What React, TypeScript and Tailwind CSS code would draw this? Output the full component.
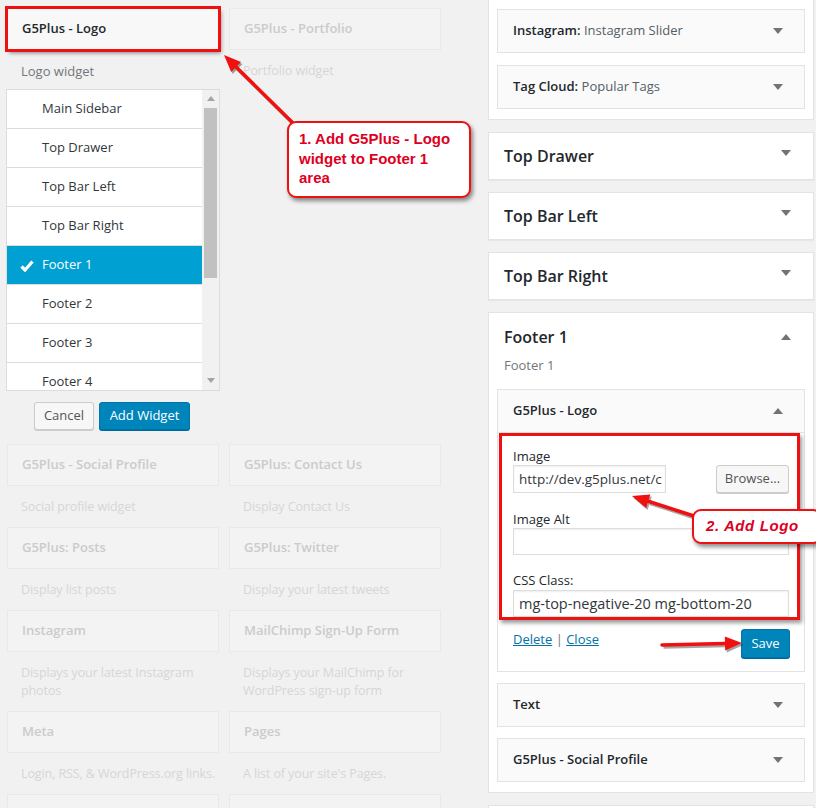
import React from 'react';

type Pair = [string, string];

const fadedWidgets: Pair[] = [
  ['G5Plus - Social Profile', 'Social profile widget'],
  ['G5Plus: Contact Us', 'Display Contact Us'],
  ['G5Plus: Posts', 'Display list posts'],
  ['G5Plus: Twitter', 'Display your latest tweets'],
  ['Instagram', 'Displays your latest Instagram photos'],
  ['MailChimp Sign-Up Form', 'Displays your MailChimp for WordPress sign-up form'],
  ['Meta', 'Login, RSS, & WordPress.org links.'],
  ['Pages', "A list of your site's Pages."],
  ['', ''],
  ['', ''],
];

const sidebars = ['Main Sidebar', 'Top Drawer', 'Top Bar Left', 'Top Bar Right', 'Footer 1', 'Footer 2', 'Footer 3', 'Footer 4'];

function Caret({ up = false }: { up?: boolean }) {
  return (
    <svg width="10" height="6" viewBox="0 0 10 6" className="shrink-0">
      <polygon points={up ? '0,6 10,6 5,0' : '0,0 10,0 5,6'} fill="#6f7479" />
    </svg>
  );
}

function FadedWidget({ title, desc }: { title: string; desc: string }) {
  return (
    <div>
      <div className="h-[42px] border border-[#e9e9e9] bg-[#f3f3f3] px-[14px] flex items-center text-[13px] font-semibold text-[#cbcbcb]">
        {title}
      </div>
      <div className="pl-[14px] -mr-[10px] pt-[12px] pb-[11px] text-[12.5px] leading-[18px] tracking-[-0.1px] text-[#d6d6d6]">{desc}</div>
    </div>
  );
}

function WidgetRow({ name, title, up = false }: { name: string; title?: string; up?: boolean }) {
  return (
    <div className="shrink-0 h-[44px] border border-[#e3e3e3] bg-[#fafafa] pl-[15px] pr-[21px] flex items-center justify-between">
      <span className="text-[13px] font-semibold text-[#23282d]">
        {name}
        {title && <span className="font-normal text-[#555d66]"> {title}</span>}
      </span>
      <Caret up={up} />
    </div>
  );
}

function AreaCard({ name }: { name: string }) {
  return (
    <div className="shrink-0 h-[48px] border border-[#e3e3e3] bg-white pl-[15px] pr-[22px] flex items-center justify-between shadow-[0_1px_1px_rgba(0,0,0,0.04)]">
      <span className="text-[16px] font-semibold text-[#23282d]">{name}</span>
      <span className="mb-[7px]">
        <Caret />
      </span>
    </div>
  );
}

function Field({ label, children, gap }: { label: string; children: React.ReactNode; gap: string }) {
  return (
    <div className={gap}>
      <div className="text-[13px] leading-[18px] text-[#23282d]">{label}</div>
      {children}
    </div>
  );
}

function Arrow({ x1, y1, x2, y2 }: { x1: number; y1: number; x2: number; y2: number }) {
  const a = Math.atan2(y2 - y1, x2 - x1);
  const len = 17;
  const w = 7;
  const bx = x2 - len * Math.cos(a);
  const by = y2 - len * Math.sin(a);
  const px = -Math.sin(a) * w;
  const py = Math.cos(a) * w;
  const head = `${x2},${y2} ${bx + px},${by + py} ${bx - px},${by - py}`;
  return (
    <g>
      <g transform="translate(1.5,2)" opacity="0.35">
        <line x1={x1} y1={y1} x2={bx} y2={by} stroke="#000" strokeWidth="3.5" />
        <polygon points={head} fill="#000" />
      </g>
      <line x1={x1} y1={y1} x2={bx} y2={by} stroke="#f01010" strokeWidth="3.5" strokeLinecap="round" />
      <polygon points={head} fill="#f01010" />
    </g>
  );
}

export default function App() {
  return (
    <div className="relative w-[816px] h-[808px] overflow-hidden bg-[#f1f1f1] font-['Open_Sans',sans-serif] flex items-start">
      {/* Available widgets */}
      <div className="w-[488px] shrink-0 pl-[7px] pt-[8px]">
        <div className="grid grid-cols-[212px_212px] gap-x-[10px] items-start">
          {/* G5Plus - Logo (expanded chooser) */}
          <div>
            <div className="h-[42px] border border-[#999] bg-[#f8f8f8] px-[14px] flex items-center text-[13px] font-semibold text-[#23282d] outline-[3px] outline-solid outline-[#ee1111] -outline-offset-1 shadow-[2px_3px_4px_rgba(0,0,0,0.45)]">
              G5Plus - Logo
            </div>
            <div className="px-[14px] pt-[12px] pb-[9px] text-[13px] leading-[18px] text-[#72777c]">Logo widget</div>
            <div className="-mx-px h-[302px] border border-[#dcdcdc] bg-white flex overflow-hidden">
              <div className="flex-1">
                {sidebars.map((s) => {
                  const on = s === 'Footer 1';
                  return (
                    <div
                      key={s}
                      className={`h-[39px] border-b border-[#dcdcdc] flex items-center relative pl-[35px] text-[13px] ${on ? 'bg-[#00a0d2] text-white' : 'text-[#32373c]'}`}
                    >
                      {on && (
                        <svg width="14" height="12" viewBox="0 0 14 12" className="absolute left-[13px] top-[14px]">
                          <path d="M1.5 6.5 L5 10 L12.5 1.5" stroke="#fff" strokeWidth="3.2" fill="none" />
                        </svg>
                      )}
                      {s}
                    </div>
                  );
                })}
              </div>
              <div className="w-[17px] bg-[#f1f1f1] flex flex-col items-center">
                <svg width="8" height="5" viewBox="0 0 8 5" className="mt-[6px]">
                  <polygon points="0,5 8,5 4,0" fill="#a3a3a3" />
                </svg>
                <div className="mt-[7px] w-[13px] h-[170px] bg-[#c1c1c1]" />
                <div className="flex-1" />
                <svg width="8" height="5" viewBox="0 0 8 5" className="mb-[7px]">
                  <polygon points="0,0 8,0 4,5" fill="#a3a3a3" />
                </svg>
              </div>
            </div>
            <div className="mt-[11px] mb-[14px] flex justify-center gap-[5px] pr-[2px]">
              <button className="h-[28px] w-[60px] rounded-[3px] border border-[#cccccc] bg-[#f7f7f7] text-[13px] text-[#555] shadow-[0_1px_0_#ccc]">
                Cancel
              </button>
              <button className="h-[28px] w-[91px] rounded-[3px] border border-[#0073aa] bg-[#0085ba] text-[13px] text-white shadow-[0_1px_0_#006799]">
                Add Widget
              </button>
            </div>
          </div>
          <FadedWidget title="G5Plus - Portfolio" desc="Portfolio widget" />
          {fadedWidgets.map(([t, d], i) => (
            <FadedWidget key={i} title={t} desc={d} />
          ))}
        </div>
      </div>

      {/* Widget areas */}
      <div className="w-[326px] shrink-0 flex flex-col gap-[12px]">
        <div className="shrink-0 -mt-px border border-[#e3e3e3] bg-white px-[8px] pt-[9px] pb-[10px] flex flex-col gap-[12px]">
          <WidgetRow name="Instagram:" title="Instagram Slider" />
          <WidgetRow name="Tag Cloud:" title="Popular Tags" />
        </div>
        <AreaCard name="Top Drawer" />
        <AreaCard name="Top Bar Left" />
        <AreaCard name="Top Bar Right" />

        <div className="shrink-0 border border-[#e3e3e3] bg-white pt-[12px] pb-[10px]">
          <div className="pl-[15px] pr-[22px] flex items-center justify-between">
            <span className="text-[16px] leading-[24px] font-semibold text-[#23282d]">Footer 1</span>
            <Caret up />
          </div>
          <div className="pl-[15px] mt-[7px] text-[13px] leading-[18px] text-[#72777c]">Footer 1</div>
          <div className="mt-[15px] px-[8px] flex flex-col gap-[11px]">
            <div>
              <WidgetRow name="G5Plus - Logo" up />
              <div className="border border-t-0 border-[#e3e3e3] bg-white pb-[13px]">
                <div className="ml-[1px] mr-[4px] border-[3px] border-[#ee1111] pl-[11px] pr-[8px] pt-[11px] shadow-[2px_3px_4px_rgba(0,0,0,0.4)]">
                  <Field label="Image" gap="">
                    <div className="flex items-center justify-between">
                      <div className="h-[28px] w-[153px] border border-[#dddddd] shadow-[inset_0_1px_2px_rgba(0,0,0,0.07)] px-[5px] flex items-center text-[13.5px] text-[#32373c] overflow-hidden whitespace-nowrap">
                        http://dev.g5plus.net/c
                      </div>
                      <button className="h-[28px] w-[73px] rounded-[3px] border border-[#cccccc] bg-[#f7f7f7] text-[13px] text-[#555] shadow-[0_1px_0_#ccc]">
                        Browse...
                      </button>
                    </div>
                  </Field>
                  <Field label="Image Alt" gap="mt-[17px]">
                    <div className="h-[27px] border border-[#dddddd] shadow-[inset_0_1px_2px_rgba(0,0,0,0.07)]" />
                  </Field>
                  <Field label="CSS Class:" gap="mt-[16px]">
                    <div className="mt-px h-[27px] border border-[#dddddd] shadow-[inset_0_1px_2px_rgba(0,0,0,0.07)] px-[5px] flex items-center text-[14.5px] text-[#32373c] whitespace-nowrap overflow-hidden">
                      mg-top-negative-20 mg-bottom-20
                    </div>
                  </Field>
                </div>
                <div className="mt-[9px] pl-[15px] pr-[14px] flex items-start justify-between">
                  <div className="text-[13px] text-[#0073aa] leading-[18px] pt-[1px]">
                    <span className="underline">Delete</span>
                    <span className="text-[#72777c]"> | </span>
                    <span className="underline">Close</span>
                  </div>
                  <button className="h-[29px] w-[49px] rounded-[3px] border border-[#0073aa] bg-[#0085ba] text-[13px] text-white shadow-[0_1px_0_#006799]">
                    Save
                  </button>
                </div>
              </div>
            </div>
            <WidgetRow name="Text" />
            <WidgetRow name="G5Plus - Social Profile" />
          </div>
        </div>
        <div className="shrink-0 h-[40px] border border-[#e3e3e3] bg-white" />
      </div>

      {/* Annotations */}
      <svg className="absolute inset-0 pointer-events-none" width="816" height="808">
        <Arrow x1={297} y1={127} x2={224} y2={55} />
        <Arrow x1={694} y1={516} x2={632} y2={496} />
        <Arrow x1={662} y1={645} x2={742} y2={643} />
      </svg>
      <div className="absolute left-[287px] top-[121px] w-[184px] h-[77px] rounded-[9px] border-2 border-[#ee1111] bg-white shadow-[2px_3px_4px_rgba(0,0,0,0.45)] pl-[10px] pt-[6px] font-['Liberation_Sans',Arial,sans-serif] text-[15px] leading-[19.5px] font-bold text-[#dd0022]">
        1. Add G5Plus - Logo
        <br />
        widget to Footer 1
        <br />
        area
      </div>
      <div className="absolute left-[692px] top-[509px] w-[130px] h-[35px] rounded-[9px] border-2 border-[#ee1111] bg-white shadow-[2px_3px_4px_rgba(0,0,0,0.45)] pl-[12px] flex items-center font-['Liberation_Sans',Arial,sans-serif] text-[15px] font-bold italic tracking-[0.6px] text-[#dd0022]">
        2. Add Logo
      </div>
    </div>
  );
}
